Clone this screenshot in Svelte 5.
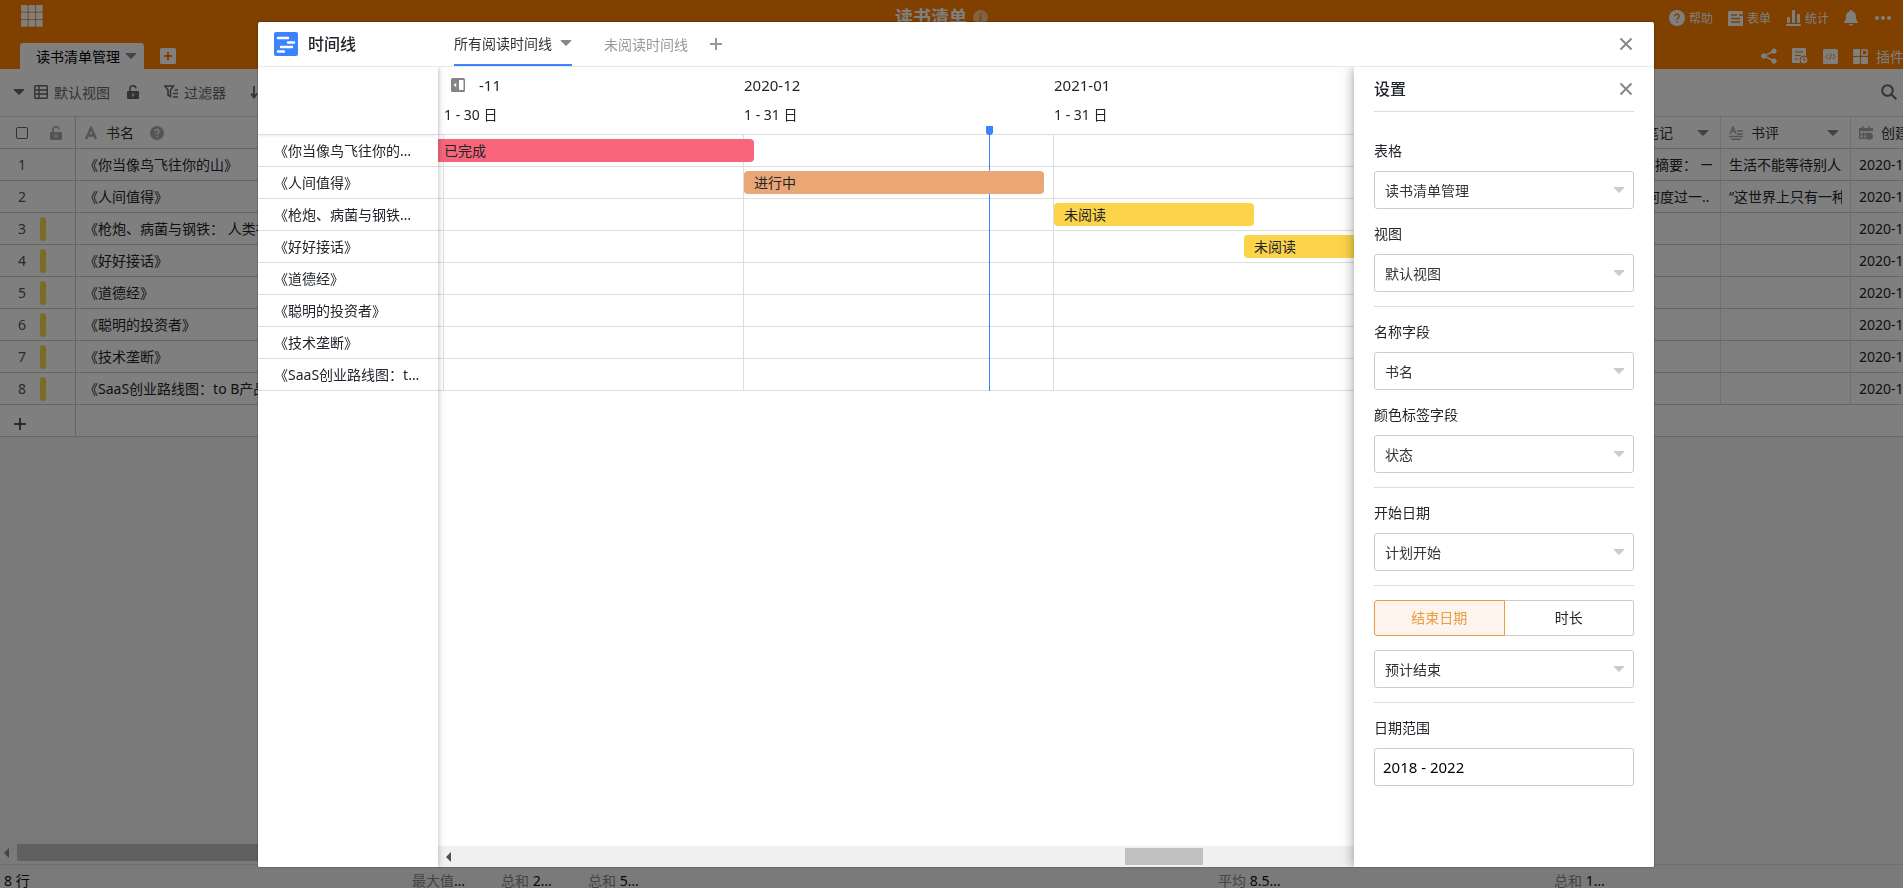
<script>
  const books = [
    { name: '《你当像鸟飞往你的山》', note: '全书内容摘要： 一', review: '生活不能等待别人来安排', done: true },
    { name: '《人间值得》', note: '“人生如何度过一..', review: '“这世界上只有一种成功', done: true },
    { name: '《枪炮、病菌与钢铁： 人类社会的命运》' },
    { name: '《好好接话》' },
    { name: '《道德经》' },
    { name: '《聪明的投资者》' },
    { name: '《技术垄断》' },
    { name: '《SaaS创业路线图：to B产品、营销、运营》' }
  ];

  // one day is 10px wide on the track
  const dayWidth = 10;
  const months = [
    { title: '', range: '', width: 6 },
    { title: '-11', range: '1 - 30 日', width: 300 },
    { title: '2020-12', range: '1 - 31 日', width: 310 },
    { title: '2021-01', range: '1 - 31 日', width: 310 }
  ];

  const bars = [
    { row: 0, left: -4, days: 32, label: '已完成', color: '#f7657b' },
    { row: 1, left: 306, days: 30, label: '进行中', color: '#eaa775' },
    { row: 2, left: 616, days: 20, label: '未阅读', color: '#fcd44a' },
    { row: 3, left: 806, days: 31, label: '未阅读', color: '#fcd44a' }
  ];

  const groups = [
    [
      { id: 'table', label: '表格', value: '读书清单管理' },
      { id: 'view', label: '视图', value: '默认视图' }
    ],
    [
      { id: 'name', label: '名称字段', value: '书名' },
      { id: 'color', label: '颜色标签字段', value: '状态' }
    ],
    [{ id: 'start', label: '开始日期', value: '计划开始' }]
  ];

  let endMode = $state('date');
  let range = $state('2018 - 2022');
</script>

{#snippet caret()}
  <svg class="caret" width="12" height="8" viewBox="0 0 12 8"><path d="M1.2 1h9.6c.5 0 .7.5.3.9L6.6 6.6c-.3.4-.9.4-1.2 0L.9 1.9C.5 1.5.7 1 1.2 1z" fill="currentColor" /></svg>
{/snippet}

{#snippet cross()}
  <svg width="16" height="16" viewBox="0 0 16 16"><path d="M2.5 2.5l11 11M13.5 2.5l-11 11" stroke="currentColor" stroke-width="2" /></svg>
{/snippet}

{#snippet lock()}
  <svg width="12" height="14" viewBox="0 0 12 14">
    <path d="M3 6.5V4a3 3 0 0 1 6-.6" fill="none" stroke="currentColor" stroke-width="1.7" />
    <path fill-rule="evenodd" d="M1 6h10a1 1 0 0 1 1 1v6a1 1 0 0 1-1 1H1a1 1 0 0 1-1-1V7a1 1 0 0 1 1-1zM5.3 8.5v3h1.4v-3z" fill="currentColor" />
  </svg>
{/snippet}

{#snippet picker(id, value, name)}
  <div class="picker">
    <select {id} aria-label={name}><option>{value}</option></select>
    {@render caret()}
  </div>
{/snippet}

<div class="app">
  <header>
    <div class="top">
      <button class="apps" aria-label="应用">
        <svg width="22" height="22" viewBox="0 0 22 22" fill="currentColor">
          {#each [0, 7.5, 15] as y}
            {#each [0, 7.5, 15] as x}
              <rect {x} {y} width="6.7" height="6.7" rx="1" />
            {/each}
          {/each}
        </svg>
      </button>
      <h1>
        读书清单
        <svg width="15" height="15" viewBox="0 0 15 15"><circle cx="7.5" cy="7.5" r="7.5" fill="#fff" opacity=".55" /><path d="M7.5 6.5V11M7.5 3.5v1.8" stroke="#ff8000" stroke-width="1.8" /></svg>
      </h1>
      <nav class="links">
        <a href="#help">
          <svg width="16" height="16" viewBox="0 0 16 16"><circle cx="8" cy="8" r="8" fill="currentColor" /><path d="M5.8 6.3a2.2 2.2 0 1 1 3.3 1.9c-.8.5-1.1.8-1.1 1.6M8 11v1.6" fill="none" stroke="#ff8000" stroke-width="1.5" /></svg>
          帮助
        </a>
        <a href="#form">
          <svg width="15" height="15" viewBox="0 0 15 15"><rect width="15" height="15" rx="1" fill="currentColor" /><path d="M3 4h6M3 7.5h9M3 11h9M11 4h4" stroke="#ff8000" stroke-width="1.4" /></svg>
          表单
        </a>
        <a href="#stats">
          <svg width="15" height="16" viewBox="0 0 15 16" fill="currentColor"><rect x="1" y="7" width="3" height="6" rx="1" /><rect x="6" y="0" width="3" height="13" rx="1" /><rect x="11" y="4" width="3" height="9" rx="1" /><rect y="14" width="15" height="2" rx="1" /></svg>
          统计
        </a>
        <button aria-label="通知">
          <svg width="14" height="16" viewBox="0 0 14 16" fill="currentColor"><path d="M7 0c.8 0 1.2.5 1.2 1.2C10.7 1.8 12 3.8 12 6.5c0 3.500.8 4.500 2 5.500v1H0v-1c1.200-1 2-2 2-5.500 0-2.700 1.300-4.700 3.800-5.300C5.800.5 6.200 0 7 0zM5 14h4c-.3 1-1 1.500-2 1.500S5.300 15 5 14z" /></svg>
        </button>
        <button aria-label="更多">
          <svg width="18" height="4" viewBox="0 0 18 4" fill="currentColor"><circle cx="3" cy="2" r="2" /><circle cx="9" cy="2" r="2" /><circle cx="15" cy="2" r="2" /></svg>
        </button>
      </nav>
    </div>
    <div class="sheets">
      <button class="sheet">读书清单管理 {@render caret()}</button>
      <button class="add-sheet" aria-label="新建表格">
        <svg width="16" height="16" viewBox="0 0 16 16"><rect width="16" height="16" rx="1.5" fill="#fff" /><path d="M4 8h8M8 4v8" stroke="#ff8000" stroke-width="2" /></svg>
      </button>
      <div class="tools">
        <button aria-label="分享">
          <svg width="16" height="16" viewBox="0 0 16 16" fill="currentColor"><path d="M13 3L3 8l10 5" fill="none" stroke="currentColor" stroke-width="1.4" /><circle cx="13" cy="3" r="2.6" /><circle cx="3" cy="8" r="2.8" /><circle cx="13" cy="13" r="2.6" /></svg>
        </button>
        <button aria-label="记录">
          <svg width="16" height="16" viewBox="0 0 16 16"><path d="M1 0h12a1 1 0 0 1 1 1v14H1a1 1 0 0 1-1-1V1a1 1 0 0 1 1-1z" fill="currentColor" /><path d="M3 4h8M3 7.5h6M3 11h3" stroke="#ff8000" stroke-width="1.2" /><circle cx="12" cy="12" r="4" fill="currentColor" stroke="#ff8000" /><path d="M12 9.5V12h2" fill="none" stroke="#ff8000" /></svg>
        </button>
        <button aria-label="脚本">
          <svg width="15" height="15" viewBox="0 0 15 15"><rect width="15" height="15" rx="1.5" fill="currentColor" /><path d="M5 5L2.8 7.5 5 10M10 5l2.2 2.5L10 10M8.3 4.5l-1.6 6" fill="none" stroke="#ff8000" /></svg>
        </button>
        <button class="plugin">
          <svg width="15" height="15" viewBox="0 0 15 15" fill="currentColor"><rect width="7" height="7" rx="1" /><rect y="8" width="7" height="7" rx="1" /><rect x="8" y="8" width="7" height="7" rx="1" /><rect x="9" y="1" width="5" height="5" fill="none" stroke="currentColor" stroke-width="1.6" /></svg>
          插件
        </button>
      </div>
    </div>
  </header>

  <div class="toolbar">
    {@render caret()}
    <button class="view">
      <svg width="14" height="14" viewBox="0 0 14 14" fill="none" stroke="currentColor" stroke-width="1.4"><rect x=".7" y=".7" width="12.6" height="12.6" rx="1" /><path d="M1 5h12M1 9h12M5 1v12" /></svg>
      默认视图
    </button>
    <button class="lock" aria-label="锁定">{@render lock()}</button>
    <button class="filter">
      <svg width="15" height="13" viewBox="0 0 15 13" fill="none" stroke="currentColor" stroke-width="1.6"><path d="M1 1h8.5L6.500 5v6.500L4 10V5zM10.500 5H14M9 8.500h5M9 12h5" /></svg>
      过滤器
    </button>
    <button class="sort" aria-label="排序">
      <svg width="14" height="14" viewBox="0 0 14 14" fill="none" stroke="currentColor" stroke-width="1.8"><path d="M4 1v11M1 8.500l3 4 3-4M12 13V2M9.500 5L12 1.500 14 5" /></svg>
    </button>
    <button class="search" aria-label="搜索">
      <svg width="16" height="16" viewBox="0 0 16 16" fill="none" stroke="currentColor" stroke-width="2"><circle cx="6.500" cy="6.500" r="5.300" /><path d="M10.500 10.500l4.800 4.800" /></svg>
    </button>
  </div>

  <main>
    <table>
      <colgroup>
        <col class="c-index" />
        <col />
        <col class="c-text" />
        <col class="c-text" />
        <col class="c-date" />
      </colgroup>
      <thead>
        <tr>
          <th>
            <div class="index head">
              <input type="checkbox" aria-label="全选" />
              {@render lock()}
            </div>
          </th>
          <th>
            <div class="field">
              <svg width="14" height="14" viewBox="0 0 14 14" fill="none" stroke="currentColor" stroke-width="2.5"><path d="M2 13L7 2l5 11M4 9.500h6" /></svg>
              书名
              <svg class="tip" width="14" height="14" viewBox="0 0 14 14"><circle cx="7" cy="7" r="7" fill="currentColor" /><path d="M5 5.500a2 2 0 1 1 3 1.700c-.7.4-1 .7-1 1.400M7 9.800v1.400" fill="none" stroke="#fff" stroke-width="1.3" /></svg>
            </div>
          </th>
          <th>
            <div class="field"><span class="long">读书笔记</span>{@render caret()}</div>
          </th>
          <th>
            <div class="field">
              <svg width="14" height="14" viewBox="0 0 14 14" fill="none" stroke="currentColor" stroke-width="1.6"><path d="M1 8L4 1l3 7M2 5.500h4M8 5h6M8 8h6M0 10.500h14M2 13.200h10" /></svg>
              书评
              {@render caret()}
            </div>
          </th>
          <th>
            <div class="field">
              <svg width="14" height="14" viewBox="0 0 14 14"><path d="M3 0h1.500v2h5V0H11v2h3v3H0V2h3z" fill="currentColor" /><path d="M.7 5v7.300H8M1 8.500h7M4.500 6v6M8 6v3" fill="none" stroke="currentColor" stroke-width="1.6" /><circle cx="10.500" cy="10.200" r="3.500" fill="currentColor" /></svg>
              创建时间
            </div>
          </th>
        </tr>
      </thead>
      <tbody>
        {#each books as book, i}
          <tr>
            <td>
              <div class="index">
                <span class="num">{i + 1}</span>
                {#if !book.done}<i class="mark"></i>{/if}
              </div>
            </td>
            <td>{book.name}</td>
            <td><div class="clip">{book.note ?? ''}</div></td>
            <td><div class="clip">{book.review ?? ''}</div></td>
            <td><div class="clip">2020-11-26</div></td>
          </tr>
        {/each}
        <tr class="new">
          <td>
            <button aria-label="新增行"><svg width="12" height="12" viewBox="0 0 12 12"><path d="M0 6h12M6 0v12" stroke="currentColor" stroke-width="1.5" /></svg></button>
          </td>
          <td colspan="4"></td>
        </tr>
      </tbody>
    </table>
  </main>

  <div class="hscroll page">
    <svg width="5" height="10" viewBox="0 0 5 10"><path d="M5 0v10L0 5z" fill="currentColor" /></svg>
    <div class="thumb"></div>
  </div>
  <footer>
    <span>8 行</span>
    <span><em>最大值</em>…</span>
    <span><em>总和</em> 2…</span>
    <span><em>总和</em> 5…</span>
    <span><em>平均</em> 8.5…</span>
    <span><em>总和</em> 1…</span>
  </footer>
</div>

<div class="mask">
  <section class="dialog">
    <div class="dialog-head">
      <svg width="24" height="24" viewBox="0 0 24 24"><rect width="24" height="24" rx="2" fill="#3a84ff" /><path d="M4 6h10M14 10.500h6M7 15h11M4 19.500h6" stroke="#fff" stroke-width="2.400" stroke-linecap="round" /></svg>
      <h2>时间线</h2>
      <div class="tabs">
        <button class="tab active">所有阅读时间线 {@render caret()}</button>
        <button class="tab">未阅读时间线</button>
        <button class="add" aria-label="新建时间线"><svg width="12" height="12" viewBox="0 0 12 12"><path d="M0 6h12M6 0v12" stroke="currentColor" stroke-width="2" /></svg></button>
      </div>
      <button class="close" aria-label="关闭">{@render cross()}</button>
    </div>

    <div class="dialog-body">
      <aside class="names">
        <div class="names-head"></div>
        {#each books as book}
          <div class="name">{book.name}</div>
        {/each}
      </aside>

      <div class="timeline">
        <div class="months">
          {#each months as m, i}
            <div class="month" style="width: {m.width}px">
              <div class="month-title">
                {#if i === 1}
                  <button class="fold" aria-label="收起">
                    <svg width="14" height="14" viewBox="0 0 14 14"><rect width="14" height="14" rx="1.5" fill="#858585" /><rect x="8" y="2" width="4.500" height="10" fill="#fff" /><path d="M5.200 4.800v4.400L2.600 7z" fill="#fff" /></svg>
                  </button>
                {/if}
                {m.title}
              </div>
              <div class="month-range">{m.range}</div>
            </div>
          {/each}
        </div>
        <div class="lanes">
          {#each books as _}
            <div class="lane">
              {#each months as m}
                <i style="width: {m.width}px"></i>
              {/each}
            </div>
          {/each}
          <div class="today">
            <svg width="7" height="9" viewBox="0 0 7 9"><path d="M0 0h7v7L5 9H2L0 7z" fill="#3a84ff" /></svg>
            <i></i>
          </div>
          {#each bars as bar}
            <div
              class="bar"
              style="left: {bar.left}px; top: {bar.row * 32 + 4}px; width: {bar.days * dayWidth}px; background: {bar.color}">
              {bar.label}
            </div>
          {/each}
        </div>
        <div class="hscroll inner">
          <svg width="5" height="10" viewBox="0 0 5 10"><path d="M5 0v10L0 5z" fill="currentColor" /></svg>
          <div class="thumb"></div>
        </div>
      </div>

      <aside class="settings">
        <div class="settings-head">
          <h3>设置</h3>
          <button class="close" aria-label="关闭设置">{@render cross()}</button>
        </div>
        {#each groups as group}
          <div class="group">
            {#each group as f}
              <label for={f.id}>{f.label}</label>
              {@render picker(f.id, f.value, f.label)}
            {/each}
          </div>
        {/each}
        <div class="group">
          <div class="segment">
            <button class:on={endMode === 'date'} onclick={() => (endMode = 'date')}>结束日期</button>
            <button class:on={endMode === 'length'} onclick={() => (endMode = 'length')}>时长</button>
          </div>
          {@render picker('end', '预计结束', '结束日期')}
        </div>
        <div class="group">
          <label for="range">日期范围</label>
          <input id="range" type="text" bind:value={range} />
        </div>
      </aside>
    </div>
  </section>
</div>

<style>
  :global(body) {
    margin: 0;
    overflow: hidden;
    font-family: "Noto Sans", "Noto Sans CJK SC", sans-serif;
    font-size: 14px;
    color: #212529;
  }
  * {
    box-sizing: border-box;
  }
  svg {
    display: block;
    flex: none;
  }
  button {
    display: flex;
    align-items: center;
    flex: none;
    padding: 0;
    border: 0;
    background: none;
    color: inherit;
    font: inherit;
    cursor: pointer;
  }
  h1, h2, h3 {
    margin: 0;
  }
  .app {
    display: flex;
    flex-direction: column;
    height: 100vh;
    background: #f5f5f5;
  }

  header {
    background: #ff8000;
    color: #fff;
  }
  .top {
    display: grid;
    grid-template-columns: 1fr auto 1fr;
    align-items: start;
    height: 43px;
    padding: 0 9px 0 21px;
  }
  .apps {
    padding-top: 5px;
  }
  h1 {
    display: flex;
    align-items: center;
    gap: 6px;
    height: 34px;
    margin-right: 32px;
    font-size: 18px;
    line-height: 34px;
  }
  .links {
    display: flex;
    justify-content: flex-end;
    align-items: center;
    gap: 15px;
    height: 36px;
    font-size: 12px;
  }
  .links a {
    display: flex;
    align-items: center;
    gap: 4px;
    color: inherit;
    text-decoration: none;
  }
  .links button + button {
    padding: 0 2px 0 1px;
  }
  .sheets {
    display: flex;
    align-items: center;
    height: 26px;
    padding-left: 20px;
  }
  .sheet {
    gap: 5px;
    height: 26px;
    padding: 0 7px 0 16px;
    border-radius: 3px 3px 0 0;
    background: #fff;
    color: #000;
  }
  .sheet > :global(.caret) {
    color: #888;
  }
  .add-sheet {
    margin-left: 16px;
  }
  .tools {
    display: flex;
    align-items: center;
    gap: 15px;
    margin: 0 -1px 0 auto;
  }
  .plugin {
    gap: 8px;
  }

  .toolbar {
    display: flex;
    align-items: center;
    flex: none;
    height: 48px;
    padding: 0 6px 2px 13px;
    border-bottom: 1px solid #ddd;
    background: #fff;
    color: #666;
  }
  .view {
    gap: 6px;
    margin-left: 9px;
  }
  .lock {
    margin-left: 17px;
  }
  .filter {
    gap: 5px;
    margin-left: 25px;
  }
  .sort {
    margin-left: 24px;
  }
  .search {
    margin-left: auto;
  }

  main {
    flex: 1;
    min-height: 0;
    overflow: hidden;
  }
  table {
    width: 100%;
    table-layout: fixed;
    border-spacing: 0;
    background: #fff;
  }
  .c-index {
    width: 76px;
  }
  .c-text {
    width: 130px;
  }
  .c-date {
    width: 52px;
  }
  th,
  td {
    height: 32px;
    padding: 0 8px;
    border-right: 1px solid #e0e0e0;
    border-bottom: 1px solid #ccc;
    line-height: 31px;
    font-weight: 400;
    text-align: left;
    white-space: nowrap;
    overflow: hidden;
  }
  th:first-child,
  td:first-child {
    padding: 0 0 0 12px;
    border-right-color: #ccc;
  }
  th:last-child,
  td:last-child {
    padding-right: 0;
    border-right: 0;
  }
  .index {
    display: flex;
    align-items: center;
    height: 31px;
    color: #555;
  }
  .index.head {
    gap: 22px;
    padding-left: 4px;
    color: #aaa;
  }
  .index input {
    width: 12px;
    height: 12px;
    margin: 0;
    appearance: none;
    border: 1px solid #666;
    border-radius: 2px;
  }
  .num {
    width: 20px;
    text-align: center;
  }
  .mark {
    width: 6px;
    height: 24px;
    margin-left: 8px;
    border-radius: 3px;
    background: #fcd54a;
  }
  .field {
    display: flex;
    align-items: center;
    gap: 8px;
    height: 31px;
    color: #333;
  }
  .field svg {
    color: #aaa;
  }
  .field > :global(.caret) {
    margin-left: auto;
    margin-right: 3px;
    color: #888;
  }
  .field .tip {
    margin-left: 8px;
  }
  .long {
    padding-left: 18px;
  }
  .clip {
    overflow: hidden;
  }
  .new button {
    padding: 6px 0 0 2px;
  }

  .hscroll {
    display: flex;
    align-items: center;
    flex: none;
  }
  .page {
    height: 21px;
    gap: 8px;
    padding: 0 0 2px 4px;
    color: #888;
  }
  .page .thumb {
    width: 60%;
    height: 17px;
    background: #c1c1c1;
  }
  footer {
    display: grid;
    grid-template-columns: 408px 89px 87px 630px 336px 1fr;
    flex: none;
    height: 24px;
    padding-left: 4px;
    border-top: 1px solid #ddd;
    line-height: 31px;
    overflow: hidden;
    color: #111;
  }
  em {
    color: #888;
    font-style: normal;
  }

  .mask {
    position: fixed;
    inset: 0;
    display: flex;
    padding: 22px 249px 21px 258px;
    background: rgba(0, 0, 0, 0.5);
  }
  .dialog {
    display: flex;
    flex-direction: column;
    flex: 1;
    min-width: 0;
    border-radius: 2px;
    background: #fff;
    box-shadow: 0 0 2px rgba(0, 0, 0, 0.5);
    overflow: hidden;
  }
  .dialog-head {
    display: flex;
    align-items: center;
    flex: none;
    height: 45px;
    padding: 0 20px 0 16px;
    border-bottom: 1px solid #e8e8e8;
  }
  h2 {
    width: 146px;
    margin-left: 10px;
    font-size: 16px;
    font-weight: 500;
    line-height: 24px;
  }
  .tabs {
    display: flex;
    align-self: stretch;
    gap: 32px;
    color: #999;
  }
  .tab.active {
    gap: 8px;
    border-bottom: 2px solid #3a84ff;
    color: #333;
  }
  .tab > :global(.caret) {
    color: #888;
  }
  .add {
    margin-left: -10px;
  }
  .close {
    margin-left: auto;
    color: #888;
  }
  .dialog-body {
    display: flex;
    flex: 1;
    min-height: 0;
  }

  .names {
    z-index: 1;
    flex: none;
    width: 180px;
    background: #fff;
    box-shadow: 0 0 6px rgba(0, 0, 0, 0.3);
    clip-path: inset(0 -10px 0 0);
  }
  .names-head {
    height: 68px;
    border-bottom: 1px solid #ddd;
    box-shadow: 0 1px 3px rgba(0, 0, 0, 0.08);
  }
  .name {
    height: 32px;
    padding: 0 16px;
    border-bottom: 1px solid #ddd;
    line-height: 32px;
    white-space: nowrap;
    overflow: hidden;
    text-overflow: ellipsis;
  }

  .timeline {
    display: flex;
    flex-direction: column;
    flex: 1;
    min-width: 0;
    overflow: hidden;
  }
  .months,
  .lane {
    display: flex;
    border-bottom: 1px solid #ddd;
  }
  .months {
    flex: none;
    height: 68px;
    padding-top: 8px;
  }
  .month {
    flex: none;
    line-height: 20px;
    white-space: nowrap;
  }
  .month-title {
    display: flex;
    height: 20px;
    margin-bottom: 10px;
    font-size: 15px;
  }
  .fold {
    padding: 0 14px 0 7px;
  }
  .lanes {
    position: relative;
  }
  .lane {
    height: 32px;
  }
  .lane i {
    flex: none;
    border-right: 1px solid #ddd;
  }
  .today {
    position: absolute;
    top: -9px;
    bottom: 0;
    left: 548px;
    display: flex;
    flex-direction: column;
    align-items: center;
    width: 7px;
  }
  .today i {
    flex: 1;
    width: 1px;
    background: #3a84ff;
  }
  .bar {
    position: absolute;
    height: 23px;
    padding-left: 10px;
    border-radius: 4px;
    line-height: 23px;
  }
  .inner {
    gap: 2px;
    height: 21px;
    margin-top: auto;
    padding-left: 8px;
    background: #f0f0f0;
    color: #505050;
  }
  .inner .thumb {
    width: 78px;
    height: 17px;
    margin-left: 74%;
    background: #c1c1c1;
  }

  .settings {
    z-index: 1;
    flex: none;
    width: 300px;
    padding: 0 20px;
    background: #fff;
    box-shadow: 0 0 12px rgba(0, 0, 0, 0.4);
    clip-path: inset(0 0 0 -16px);
  }
  .settings-head {
    display: flex;
    align-items: center;
    height: 45px;
    margin-bottom: 14px;
    border-bottom: 1px solid #ddd;
  }
  h3 {
    font-size: 16px;
    font-weight: 500;
    line-height: 24px;
  }
  .group {
    padding-bottom: 14px;
    margin-bottom: 14px;
    border-bottom: 1px solid #ddd;
  }
  .group:last-child {
    border-bottom: 0;
  }
  .settings-head + .group {
    padding-top: 14px;
  }
  label {
    display: block;
    margin: 15px 0 10px;
    line-height: 20px;
  }
  .group label:first-child {
    margin-top: 0;
    padding-top: 1px;
  }
  .picker {
    display: grid;
    align-items: center;
  }
  .picker > * {
    grid-area: 1 / 1;
  }
  .picker > :global(.caret) {
    justify-self: end;
    margin-right: 9px;
    color: #ccc;
    pointer-events: none;
  }
  select,
  input[type='text'] {
    width: 100%;
    height: 38px;
    padding: 0 10px;
    appearance: none;
    border: 1px solid #ccc;
    border-radius: 3px;
    background: #fff;
    color: #333;
    font: inherit;
  }
  input[type='text'] {
    padding: 0 8px;
    color: #000;
    font-size: 15px;
  }
  .segment {
    display: flex;
    height: 36px;
    margin-bottom: 14px;
  }
  .segment button {
    flex: 1;
    justify-content: center;
    padding-bottom: 2px;
    border: 1px solid #ccc;
    border-radius: 0 3px 3px 0;
  }
  .segment button:first-child {
    border-radius: 3px 0 0 3px;
  }
  .segment button:last-child {
    border-left: 0;
  }
  .segment button.on {
    border: 1px solid #e99d42;
    background: #fdf5ed;
    color: #e99d42;
  }
</style>
